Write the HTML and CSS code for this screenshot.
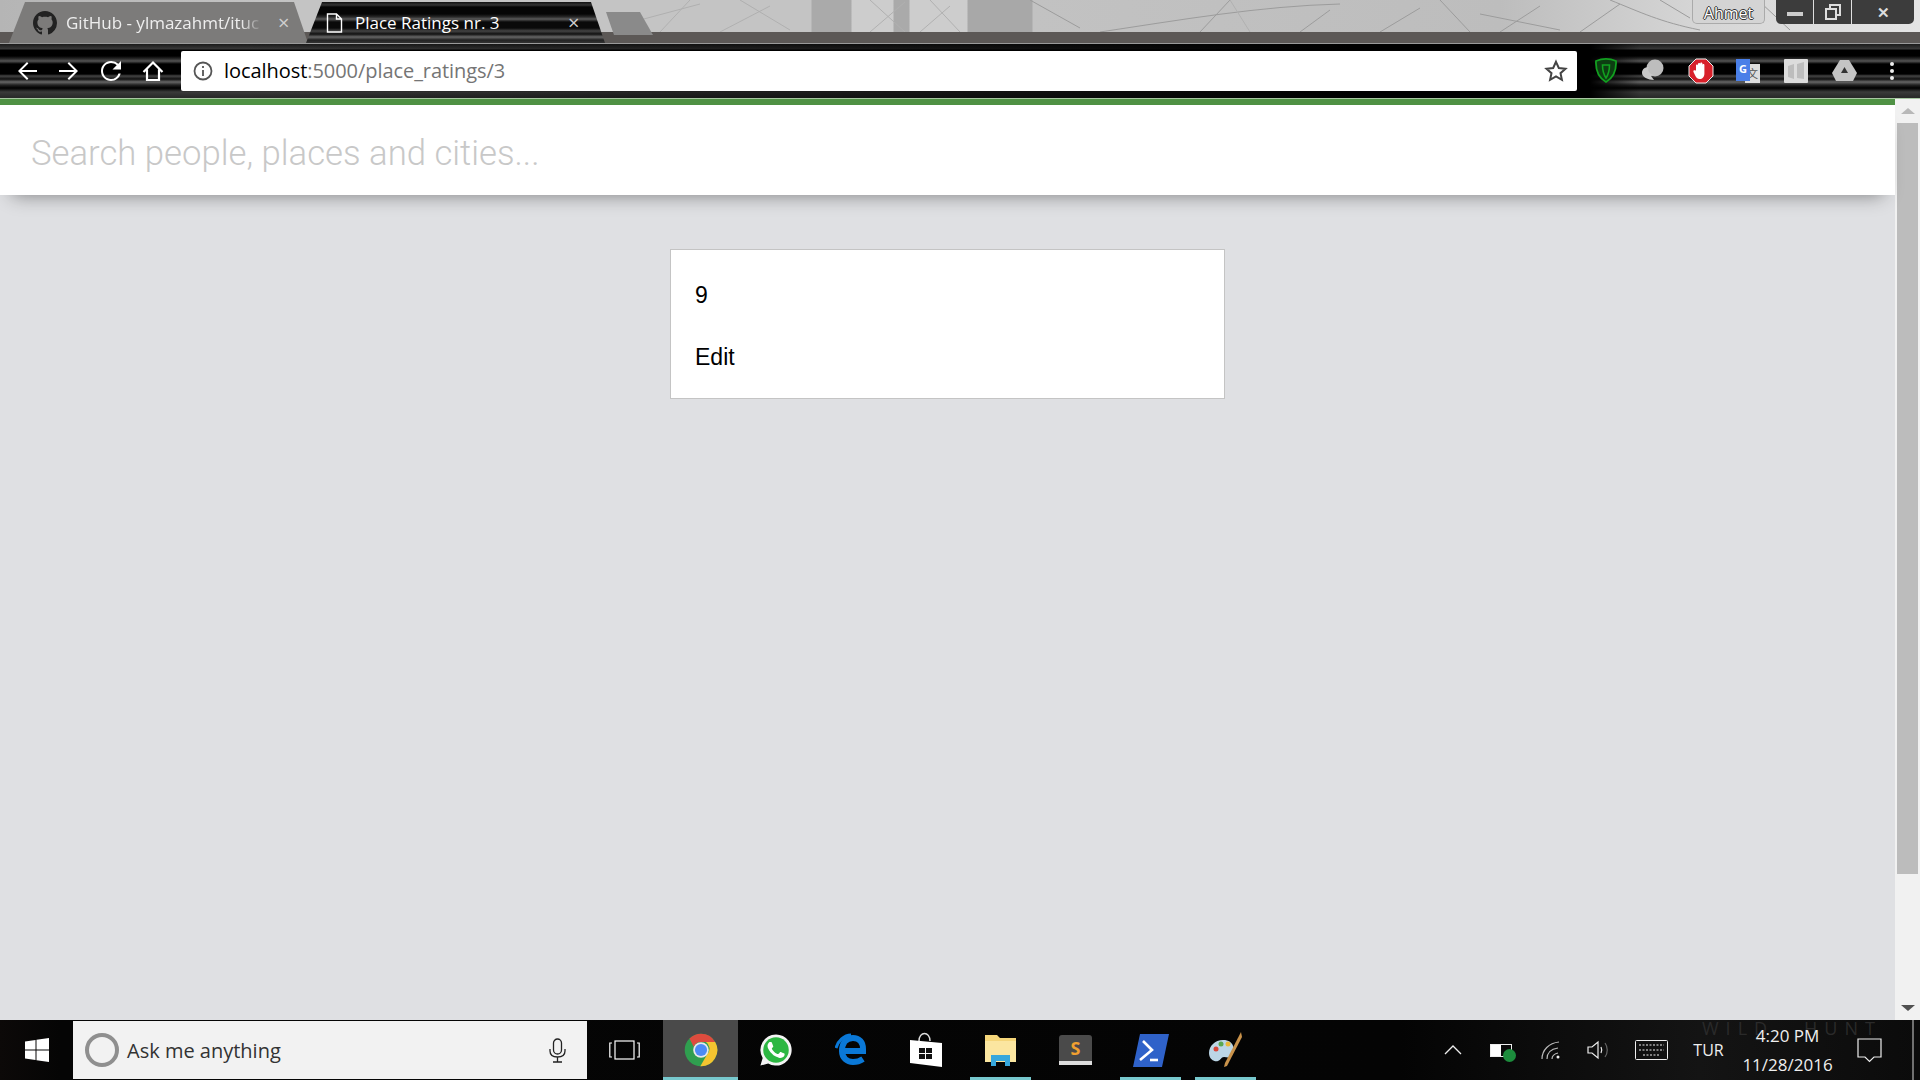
FILE: index.html
```html
<!DOCTYPE html>
<html>
<head>
<meta charset="utf-8">
<title>Place Ratings nr. 3</title>
<link rel="stylesheet" href="styles.css">
</head>
<body>
<div class="window">

  <div class="tabstrip">
    <svg class="branches" width="1920" height="32" viewBox="0 0 1920 32" fill="none" stroke="#9c9c9c" stroke-width="1">
      <path d="M1030 0 L1080 28 M1100 32 C1180 20 1260 6 1340 4 M1440 0 L1470 32 M1540 6 L1500 32 M1610 0 C1640 12 1660 22 1700 30 M1760 2 L1790 30 M1380 32 L1420 8 M1200 32 L1230 0 M1300 32 L1330 10 M1480 14 L1560 30 M1580 32 L1620 4 M1660 0 L1690 18"/>
      <path d="M870 0 L905 32 M905 2 L870 32 M720 32 L770 6 M640 20 L700 4 M1230 0 L1250 32 M660 32 L690 0 M740 0 L790 30 M930 0 L960 32 M950 6 L920 32" stroke="#b0b0b0"/>
    </svg>
    <div class="tab tab-back">
      <svg class="tab-icon" width="24" height="24" viewBox="0 0 16 16" fill="#222"><path d="M8 0C3.58 0 0 3.58 0 8c0 3.54 2.29 6.53 5.47 7.59.4.07.55-.17.55-.38 0-.19-.01-.82-.01-1.49-2.01.37-2.53-.49-2.69-.94-.09-.23-.48-.94-.82-1.13-.28-.15-.68-.52-.01-.53.63-.01 1.08.58 1.23.82.72 1.21 1.87.87 2.33.66.07-.52.28-.87.51-1.07-1.78-.2-3.64-.89-3.64-3.95 0-.87.31-1.59.82-2.15-.08-.2-.36-1.02.08-2.12 0 0 .67-.21 2.2.82.64-.18 1.32-.27 2-.27.68 0 1.36.09 2 .27 1.53-1.04 2.2-.82 2.2-.82.44 1.1.16 1.92.08 2.12.51.56.82 1.27.82 2.15 0 3.07-1.87 3.75-3.65 3.95.29.25.54.73.54 1.48 0 1.07-.01 1.93-.01 2.2 0 .21.15.46.55.38A8.013 8.013 0 0 0 16 8c0-4.42-3.58-8-8-8z"/></svg>
      <span class="tab-title">GitHub - ylmazahmt/ituc</span>
      <span class="tab-close">×</span>
    </div>
    <div class="tab tab-active">
      <svg class="tab-icon" width="17" height="20" viewBox="0 0 17 20" fill="none" stroke="#fff" stroke-width="1.4"><path d="M1.5 1h9l5 5v13h-14z M10.5 1v5h5"/></svg>
      <span class="tab-title">Place Ratings nr. 3</span>
      <span class="tab-close">×</span>
    </div>
    <div class="newtab"></div>
    <div class="spacer"></div>
    <div class="profile">Ahmet</div>
    <div class="winctl">
      <span class="winbtn"><i class="win-min"></i></span>
      <span class="winbtn"><svg width="16" height="16" viewBox="0 0 16 16" fill="none" stroke="#ddd" stroke-width="2"><path d="M1 5h10v10H1z M5 5V1h10v10h-4"/></svg></span>
      <span class="winbtn winbtn-close">✕</span>
    </div>
  </div>

  <div class="toolbar">
    <svg class="navicon" width="24" height="24" viewBox="0 0 24 24" fill="#fff"><path d="M22 11H6.8l6.6-6.6L12 3l-9 9 9 9 1.4-1.4L6.8 13H22z"/></svg>
    <svg class="navicon" width="24" height="24" viewBox="0 0 24 24" fill="#fff"><path d="M2 11h15.2l-6.6-6.6L12 3l9 9-9 9-1.4-1.4 6.6-6.6H2z"/></svg>
    <svg class="navicon" width="24" height="24" viewBox="0 0 24 24" fill="#fff"><path d="M19.3 4.7A10 10 0 0 0 12 2C6.5 2 2 6.5 2 12s4.500 10 10 10c4.700 0 8.600-3.200 9.700-7.500h-2.200A8 8 0 0 1 12 20c-4.400 0-8-3.600-8-8s3.600-8 8-8c2.200 0 4.200.9 5.700 2.300L13.500 10.500H22V2z"/></svg>
    <svg class="navicon" width="24" height="24" viewBox="0 0 24 24" fill="none" stroke="#fff" stroke-width="2.200"><path d="M2.500 13 12 3.500 21.500 13 M6 10.500V21h12V10.500"/></svg>
    <div class="omnibox">
      <svg width="20" height="20" viewBox="0 0 20 20" fill="none" stroke="#555" stroke-width="1.800"><circle cx="10" cy="10" r="8.500"/><path d="M10 9v6 M10 5v2"/></svg>
      <span class="url"><span class="url-host">localhost</span>:5000/place_ratings/3</span>
      <span class="spacer"></span>
      <svg width="24" height="24" viewBox="0 0 24 24" fill="none" stroke="#444" stroke-width="2"><path d="M12 2.800l2.800 6.200 6.700.7-5 4.500 1.400 6.600-5.900-3.400-5.900 3.400 1.400-6.600-5-4.500 6.700-.7z"/></svg>
    </div>
    <div class="extensions">
      <svg class="ext" width="24" height="26" viewBox="0 0 24 26"><path d="M2 3c6-2.500 14-2.500 20 0 .5 9-3 17-10 21C5 20 1.500 12 2 3z" fill="#0d3d12" stroke="#12a020" stroke-width="1.800"/><path d="M8.500 7h7c0 6-1.500 10-3.500 13-2-3-3.500-7-3.500-13z" fill="none" stroke="#12a020" stroke-width="1.600"/></svg>
      <svg class="ext" width="26" height="26" viewBox="0 0 26 26"><circle cx="15" cy="10" r="8.500" fill="#bdbdbd"/><path d="M2 15c0-4 3-6 7-6-2 3 0 7 5 8l-3 1 3 4c-6 0-12-3-12-7z" fill="#c9c9c9"/></svg>
      <svg class="ext" width="26" height="26" viewBox="0 0 26 26"><path d="M8 1h10l7 7v10l-7 7H8l-7-7V8z" fill="#d8202a" stroke="#eee" stroke-width="1"/><path d="M8 12V7.500c0-1.400 2-1.400 2 0V6c0-1.500 2.200-1.500 2.200 0v-.5c0-1.500 2.200-1.500 2.200 0V7c0-1.400 2-1.400 2 0v8.500c0 3.500-2 5.500-4.700 5.500-2.500 0-3.400-1.200-4.500-3.500L5.500 14c-.7-1.400 1-2.200 1.800-1.200z" fill="#fff"/></svg>
      <span class="ext translate"><span class="tr-back">文</span><span class="tr-front">G</span></span>
      <svg class="ext" width="24" height="24" viewBox="0 0 24 24"><rect width="24" height="24" rx="1" fill="#dcdcdc"/><path d="M4 7l6-2v15l-6-2z M13 5l7-2v17l-7-1z" fill="#bdbdbd"/></svg>
      <svg class="ext" width="25" height="22" viewBox="0 0 25 22"><path d="M8 0h9l8 13-4 8H4l-4-8z" fill="#c4c4c4"/><path d="M12.500 7l3.500 6H9z" fill="#333"/></svg>
      <span class="dots"><i></i><i></i><i></i></span>
    </div>
  </div>

  <div class="viewport">
    <div class="page">
      <div class="accent"></div>
      <div class="searchbar">
        <input class="search-input" type="text" placeholder="Search people, places and cities...">
      </div>
      <div class="content">
        <div class="card">
          <p class="card-line">9</p>
          <p class="card-line">Edit</p>
        </div>
      </div>
    </div>
    <div class="scrollbar">
      <div class="sb-btn"><i class="arrow-up"></i></div>
      <div class="sb-thumb"></div>
      <div class="spacer"></div>
      <div class="sb-btn"><i class="arrow-down"></i></div>
    </div>
  </div>

  <div class="taskbar">
    <div class="startbtn">
      <svg width="24" height="24" viewBox="0 0 24 24" fill="#fff"><path d="M0 3.500l10.500-1.500v9.500H0z M11.500 1.800L24 0v11.500H11.500z M0 12.500h10.500V22L0 20.500z M11.500 12.500H24V24l-12.500-1.800z"/></svg>
    </div>
    <div class="cortana">
      <span class="cortana-ring"></span>
      <span class="cortana-text">Ask me anything</span>
      <span class="spacer"></span>
      <svg width="17" height="25" viewBox="0 0 17 25" fill="none" stroke="#222" stroke-width="1.300"><rect x="4.500" y="1" width="8" height="15" rx="4"/><path d="M1 11v2c0 4 3 6 7.500 6s7.500-2 7.500-6v-2 M8.500 19v5 M4 24h9"/></svg>
    </div>
    <div class="tile tile-taskview">
      <svg width="31" height="20" viewBox="0 0 31 20" fill="none" stroke="#fff" stroke-width="1.200"><rect x="6" y="1" width="19" height="18"/><path d="M3 3H.8v14H3 M28 3h2.200v14H28"/></svg>
    </div>
    <div class="tile tile-open tile-active">
      <svg width="34" height="34" viewBox="0 0 24 24"><circle cx="12" cy="12" r="11.500" fill="#2f9e4f"/><path d="M12 .5a11.500 11.500 0 0 1 10 5.800H12a5.700 5.700 0 0 0-5.200 3.400L3.900 3.900A11.500 11.500 0 0 1 12 .5z" fill="#dd4b3e"/><path d="M22 6.300a11.500 11.500 0 0 1-10.500 17.200l5-8.600a5.700 5.700 0 0 0-1-8.600z" fill="#f4c430"/><circle cx="12" cy="12" r="5.500" fill="#e8e8e8"/><circle cx="12" cy="12" r="4.300" fill="#4c8bf5"/></svg>
    </div>
    <div class="tile">
      <svg width="34" height="34" viewBox="0 0 24 24"><path d="M12 1a11 11 0 0 0-9.400 16.600L1 23l5.500-1.500A11 11 0 1 0 12 1z" fill="#f4f4f4"/><circle cx="12" cy="12" r="9" fill="#2cb742"/><path d="M17.472 14.382c-.297-.149-1.758-.867-2.030-.967-.273-.099-.471-.148-.670.150-.197.297-.767.966-.940 1.164-.173.199-.347.223-.644.075-.297-.150-1.255-.463-2.390-1.475-.883-.788-1.480-1.761-1.653-2.059-.173-.297-.018-.458.130-.606.134-.133.298-.347.446-.520.149-.174.198-.298.298-.497.099-.198.050-.371-.025-.520-.075-.149-.669-1.612-.916-2.207-.242-.579-.487-.5-.669-.51-.173-.008-.371-.010-.570-.010-.198 0-.520.074-.792.372-.272.297-1.040 1.016-1.040 2.479 0 1.462 1.065 2.875 1.213 3.074.149.198 2.096 3.200 5.077 4.487.709.306 1.262.489 1.694.625.712.227 1.360.195 1.871.118.571-.085 1.758-.719 2.006-1.413.248-.694.248-1.289.173-1.413-.074-.124-.272-.198-.570-.347z" fill="#fff"/></svg>
    </div>
    <div class="tile">
      <svg width="32" height="34" viewBox="0 0 32 34" fill="none" stroke="#0a78d7" stroke-width="6"><path d="M7 18C7 10 11 5 18 5c6 0 10 4 10 11v2H7 M7 18c0 7 5 11 11 11 3 0 7-1 10-3"/><path d="M1 15C3 8 9 2 16 2" stroke-width="3"/></svg>
    </div>
    <div class="tile">
      <svg width="34" height="36" viewBox="0 0 34 36"><path d="M10 9c0-10 11-10 11 0" fill="none" stroke="#ddd" stroke-width="1.500"/><path d="M1 8l32 3v24L1 31z" fill="#fff"/><path d="M10 16h6v5h-6z M17 16h6v5h-6z M10 22h6v5h-6z M17 22h6v5h-6z" fill="#111"/></svg>
    </div>
    <div class="tile tile-open">
      <svg width="33" height="32" viewBox="0 0 33 32"><path d="M1 1h12l3 3h16v24H1z" fill="#f5d67a"/><path d="M1 7h31v21H1z" fill="#fbe6a0"/><path d="M7 32V21h19v11h-5v-5h-9v5z" fill="#37a7dc"/></svg>
    </div>
    <div class="tile">
      <span class="sublime"><span class="sublime-s">S</span></span>
    </div>
    <div class="tile tile-open">
      <svg width="36" height="33" viewBox="0 0 36 33"><path d="M7 0h29l-7 33H0z" fill="#2f62c9"/><path d="M10 7l9 9-12 10" fill="none" stroke="#fff" stroke-width="2.600"/><path d="M17 26h8" stroke="#fff" stroke-width="2.600"/></svg>
    </div>
    <div class="tile tile-open">
      <svg width="35" height="36" viewBox="0 0 35 36"><path d="M15 8C7 8 1 14 1 21s6 9 9 8 3-4 6-4 5 2 8-2 3-15-9-15z" fill="#bcd6e6"/><circle cx="8" cy="17" r="2.500" fill="#d9473a"/><circle cx="13" cy="12" r="2.500" fill="#5aa84f"/><circle cx="20" cy="12" r="2.500" fill="#e9b73a"/><path d="M33 0l1 5-15 29-3 1 1-4z" fill="#c9924a"/></svg>
    </div>

    <div class="spacer"></div>

    <div class="tray">
      <span class="watermark watermark-left">WILD</span>
      <span class="watermark watermark-right">HUNT</span>
      <svg class="tray-chevron" width="18" height="10" viewBox="0 0 18 10" fill="none" stroke="#eee" stroke-width="1.300"><path d="M1 9l8-8 8 8"/></svg>
      <span class="battery"><i class="battery-fill"></i><i class="battery-leaf"></i></span>
      <svg class="tray-wifi" width="20" height="18" viewBox="0 0 20 18" fill="none" stroke="#bbb" stroke-width="1.200"><path d="M1 18C1 9 8 2 18 1 M6 18c0-6 4-10 11-11 M11 18c0-3 2-5 6-6"/><circle cx="17" cy="16" r="1.500" fill="#eee" stroke="none"/></svg>
      <svg class="tray-vol" width="23" height="20" viewBox="0 0 23 20" fill="none" stroke="#eee" stroke-width="1.200"><path d="M1 7h4l6-5v16l-6-5H1z M14 7c1 2 1 4 0 6"/><path d="M18 3c3 4 3 10 0 14" stroke="#666"/></svg>
      <svg class="tray-kbd" width="33" height="20" viewBox="0 0 33 20" fill="none" stroke="#eee" stroke-width="1"><rect x=".5" y=".5" width="32" height="19" rx="1"/><path d="M4 5h25 M4 10h25 M8 15h17" stroke-dasharray="2 1.500"/></svg>
      <span class="tray-lang">TUR</span>
      <span class="clock"><span>4:20 PM</span><span>11/28/2016</span></span>
      <svg class="tray-note" width="25" height="25" viewBox="0 0 25 25" fill="none" stroke="#eee" stroke-width="1.200"><path d="M1 1h23v18h-7l-4.500 4.500L8 19H1z"/></svg>
      <span class="showdesk"></span>
    </div>
  </div>

</div>
</body>
</html>
```
FILE: styles.css
```css
* { box-sizing: border-box; }
html, body { margin: 0; height: 100%; overflow: hidden; }
body { font-family: "Open Sans", "Liberation Sans", sans-serif; background: #000; }
i { display: block; }
.spacer { flex: 1; }
.window { display: flex; flex-direction: column; height: 100vh; }

/* tab strip */
.tabstrip { position: relative; display: flex; align-items: flex-end; height: 44px; padding-left: 9px; flex: none;
  border-bottom: 1px solid #9a9a9a;
  background:
    linear-gradient(#5c5856, #5c5856) 0 32px / 100% 12px no-repeat,
    linear-gradient(90deg, #b5b5b5 0, #c4c4c4 300px, #c4c4c4 811px, #aaa 812px, #aaa 851px, #cdcdcd 852px, #cdcdcd 893px, #aaa 894px, #aaa 909px, #cdcdcd 910px, #cdcdcd 967px, #a8a8a8 968px, #a8a8a8 1032px, #c2c2c2 1033px, #bdbdbd 1500px, #d6d6d6 1700px, #e4e4e4 1920px); }
.branches { position: absolute; left: 0; top: 0; }
.tab { position: relative; display: flex; align-items: center; width: 299px; height: 41px; margin-right: -6px; font-size: 17px; color: #eee; white-space: nowrap; }
.tab-back { padding-left: 24px; background: #7c7b7a; clip-path: polygon(0 100%, 16px 0, 285px 0, 299px 100%); }
.tab-active { padding-left: 20px; margin-left: 4px; color: #fff;
  background: linear-gradient(#111 0, #333 3px, #050505 5px, #050505 12px, #2a2a2a 15px, #5a5a5a 17px, #0a0a0a 20px, #0a0a0a 26px, #444 29px, #111 32px, #666 35px, #222 38px, #333 41px);
  clip-path: polygon(0 100%, 16px 0, 285px 0, 299px 100%); }
.tab-icon { flex: none; }
.tab-title { margin-left: 9px; overflow: hidden; }
.tab-back .tab-title { width: 197px; -webkit-mask-image: linear-gradient(90deg, #000 175px, transparent 197px); }
.tab-active .tab-title { width: 198px; margin-left: 12px; }
.tab-close { margin-left: 15px; font-size: 20px; line-height: 20px; color: #cfcfcf; }
.newtab { position: relative; width: 47px; height: 23px; margin: 0 0 8px 7px; background: #8a8a8a; clip-path: polygon(0 0, 34px 0, 47px 100%, 8px 100%); }
.profile { position: relative; align-self: flex-start; width: 73px; height: 24px; margin-right: 11px; text-align: center; font-size: 16px; line-height: 26px; color: #fff; text-shadow: -1px 0 #333, 1px 0 #333, 0 -1px #333, 0 1px #333; border: 1px solid #aaa; border-top: 0; border-radius: 0 0 5px 5px; background: #d4d4d4; }
.winctl { position: relative; align-self: flex-start; display: flex; height: 24px; margin-right: 6px; border-radius: 0 0 5px 5px; overflow: hidden; }
.winbtn { display: flex; align-items: center; justify-content: center; width: 37px; height: 24px; margin-right: 1px; background: #3c3c3c; color: #ddd; font-size: 15px; font-weight: 700; }
.winbtn-close { width: 62px; margin-right: 0; }
.win-min { width: 16px; height: 4px; background: #ccc; margin-top: 4px; }

/* toolbar */
.toolbar { display: flex; align-items: center; flex: none; height: 54px; padding: 0 0 1px 15px;
  background:
    linear-gradient(90deg, transparent 0, transparent 240px, #000 1350px, #000 1590px, transparent 1640px),
    linear-gradient(#1a1a1a 0, #3a3a3a 5px, #000 6px, #000 12px, #2c2c2c 15px, #555 17px, #000 20px, #000 30px, #444 32px, #111 35px, #666 38px, #222 41px, #000 44px, #3a3a3a 48px, #2a2a2a 53px); }
.navicon { flex: none; margin-right: 18px; }
.omnibox { display: flex; align-items: center; width: 1396px; height: 40px; margin-left: -2px; padding: 0 9px 0 12px; background: #fff; border-radius: 2px; font-size: 20px; }
.url { margin-left: 11px; color: #757575; letter-spacing: -.06px; }
.url-host { color: #000; }
.extensions { display: flex; align-items: center; flex: 1; min-width: 0; }
.ext { flex: none; margin-left: 0; }
.extensions > :nth-child(1) { margin-left: 17px; }
.extensions > :nth-child(2) { margin-left: 22px; }
.extensions > :nth-child(3) { margin-left: 22px; }
.extensions > :nth-child(4) { margin-left: 22px; }
.extensions > :nth-child(5) { margin-left: 24px; }
.extensions > :nth-child(6) { margin-left: 24px; }
.translate { position: relative; display: block; width: 24px; height: 24px; }
.tr-back { position: absolute; right: 0; bottom: 0; width: 15px; height: 19px; font-size: 11px; line-height: 19px; text-align: center; color: #555; background: #ddd; font-family: "Noto Sans CJK SC", sans-serif; }
.tr-front { position: absolute; left: 0; top: 0; width: 14px; height: 22px; font-size: 11px; font-weight: 700; line-height: 20px; text-align: center; color: #fff; background: #4a7fe8; }
.dots { display: flex; flex-direction: column; gap: 3px; margin-left: 33px; }
.dots i { width: 4px; height: 4px; border-radius: 50%; background: #eee; }

/* page */
.viewport { display: flex; flex: 1; min-height: 0; border-top: 1px solid #a8c6a2; }
.page { display: flex; flex-direction: column; flex: 1; min-width: 0; background: #dfe0e3; }
.accent { height: 6px; flex: none; background: #4f9144; }
.searchbar { position: relative; height: 90px; flex: none; background: #fff; box-shadow: 0 12px 18px -12px rgba(0, 0, 0, .45); }
.search-input { display: block; width: 100%; height: 90px; padding: 6px 31px 0; border: 0; outline: 0; background: transparent; font-family: Roboto, sans-serif; font-weight: 300; font-size: 34.7px; }
.search-input::placeholder { color: #c8c8c8; opacity: 1; }
.content { flex: 1; padding-top: 54px; }
.card { display: flex; flex-direction: column; gap: 36px; width: 555px; height: 150px; margin: 0 auto; padding: 32px 24px 0; background: #fff; border: 1px solid #c4c4c4; }
.card-line { margin: 0; font-family: "Liberation Sans", Arial, sans-serif; font-size: 23px; line-height: 26px; color: #000; }
.scrollbar { display: flex; flex-direction: column; width: 25px; flex: none; background: #f1f1f1; }
.sb-btn { display: flex; align-items: center; justify-content: center; height: 24px; flex: none; }
.arrow-up { border: 7px solid transparent; border-top: 0; border-bottom: 6px solid #b8b8b8; }
.arrow-down { border: 7px solid transparent; border-bottom: 0; border-top: 6px solid #505050; }
.sb-thumb { height: 751px; margin: 0 2px; background: #bcbcbc; }

/* taskbar */
.taskbar { display: flex; align-items: center; flex: none; height: 60px; background: linear-gradient(90deg, #0c0908 0, #050505 60px, #040404 1400px, #141414 1700px, #0b0b0b 1920px); }
.startbtn { display: flex; align-items: center; justify-content: center; width: 73px; height: 60px; }
.cortana { display: flex; align-items: center; width: 514px; height: 58px; padding: 0 21px 0 12px; background: #f2f2f2; }
.cortana-ring { width: 34px; height: 34px; border: 4px solid #8f8f8f; border-radius: 50%; flex: none; }
.cortana-text { margin-left: 8px; font-size: 20px; color: #333; }
.tile { position: relative; display: flex; align-items: center; justify-content: center; width: 75px; height: 60px; flex: none; }
.tile-taskview { margin-right: 1px; }
.tile svg { flex: none; }
.tile-open::after { content: ""; position: absolute; left: 7px; right: 7px; bottom: 0; height: 3px; background: #77c8cd; }
.tile-active { background: #4a4a4a; }
.tile-active::after { left: 0; right: 0; }
.sublime { display: flex; justify-content: center; width: 33px; height: 30px; padding-top: 1px; background: #4a4a4a; border-bottom: 4px solid #ddd; border-radius: 3px 3px 0 0; }
.sublime-s { font-size: 18px; font-weight: 700; line-height: 24px; color: #f0a030; }
.tray { position: relative; display: flex; align-items: center; height: 60px; color: #eee; }
.watermark { position: absolute; top: 0; font-size: 18px; line-height: 16px; letter-spacing: 7px; color: #2a2a2a; white-space: nowrap; }
.watermark-left { left: 258px; }
.watermark-right { left: 360px; }
.tray-chevron { margin-right: 28px; }
.battery { position: relative; display: block; width: 22px; height: 13px; margin-right: 29px; border: 1px solid #eee; }
.battery-fill { width: 10px; height: 11px; background: #fff; }
.battery-leaf { position: absolute; right: -5px; bottom: -6px; width: 13px; height: 13px; border-radius: 50%; background: #1c8c3c; }
.tray-wifi { margin-right: 26px; }
.tray-vol { margin-right: 25px; }
.tray-kbd { margin-right: 24px; }
.tray-lang { width: 33px; margin-right: 16px; font-size: 16px; text-align: center; }
.clock { position: relative; display: flex; flex-direction: column; align-items: center; gap: 9px; width: 93px; margin-right: 23px; font-size: 17px; line-height: 20px; }
.tray-note { margin-right: 30px; }
.showdesk { width: 2px; height: 60px; background: #707070; margin-right: 6px; }
```
